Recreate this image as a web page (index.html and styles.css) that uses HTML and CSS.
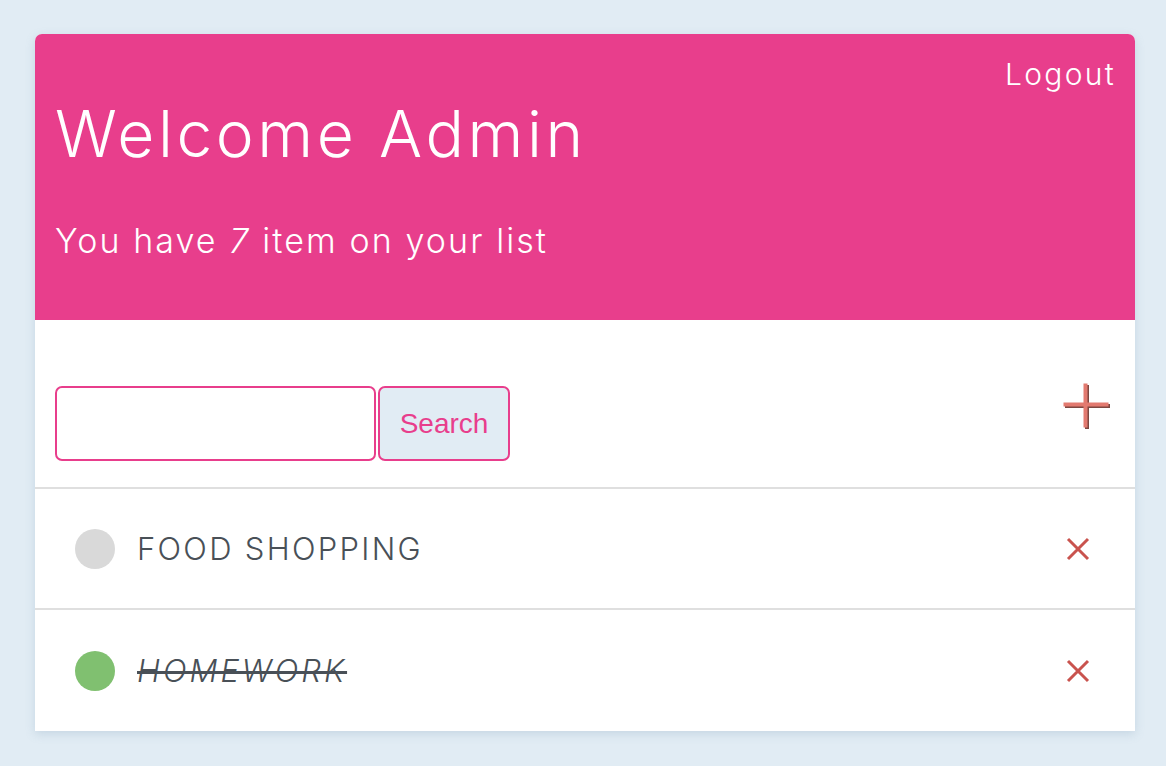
FILE: index.html
```html
<!DOCTYPE html>
<html>
<head>
<meta charset="utf-8">
<link rel="stylesheet" href="styles.css">
</head>
<body>
<div class="card">
  <header class="header">
    <div class="header-top"><a class="logout">Logout</a></div>
    <h1 class="title">Welcome Admin</h1>
    <p class="subtitle">You have <em>7</em> item on your list</p>
  </header>
  <div class="toolbar">
    <form class="search">
      <input class="search-input" type="text">
      <button class="search-btn" type="button">Search</button>
    </form>
    <svg class="add" width="50" height="48" viewBox="0 0 50 48">
      <rect x="23" y="2" width="4" height="44" fill="#7e4741"/>
      <rect x="3" y="21" width="45" height="4" fill="#7e4741"/>
      <rect x="21.5" y="0.5" width="4" height="44" fill="#e37a70"/>
      <rect x="1.5" y="19.5" width="45" height="4" fill="#e37a70"/>
    </svg>
  </div>
  <ul class="list">
    <li class="item">
      <span class="dot"></span>
      <span class="label">FOOD SHOPPING</span>
      <svg class="del" width="24" height="24" viewBox="0 0 24 24"><path d="M2 2L22 22M22 2L2 22" stroke="#c9534e" stroke-width="3"/></svg>
    </li>
    <li class="item done">
      <span class="dot"></span>
      <span class="label">HOMEWORK</span>
      <svg class="del" width="24" height="24" viewBox="0 0 24 24"><path d="M2 2L22 22M22 2L2 22" stroke="#c9534e" stroke-width="3"/></svg>
    </li>
  </ul>
</div>
</body>
</html>
```

FILE: styles.css
```css
* { box-sizing: border-box; }
html, body { margin: 0; padding: 0; }
body {
  background: #e1ecf4;
  font-family: Inter, "Open Sans", sans-serif;
  font-weight: 300;
  padding: 34px 31px 0 35px;
  height: 766px;
  overflow: hidden;
}
.card {
  width: 1100px;
  background: #fff;
  border-radius: 7px 7px 0 0;
  box-shadow: 0 3px 10px rgba(120, 150, 180, 0.25);
}
.header {
  background: #e83e8c;
  color: #fff;
  height: 286px;
  padding: 20px 21px 0 20px;
  border-radius: 7px 7px 0 0;
}
.header-top { display: flex; justify-content: flex-end; }
.logout { font-size: 30px; line-height: 40px; letter-spacing: 2.3px; margin-right: -2px; }
.title {
  margin: 0;
  font-weight: 300;
  font-size: 64px;
  line-height: 80px;
  margin-top: 0;
  letter-spacing: 3.6px;
}
.subtitle {
  margin: 47px 0 0;
  font-size: 34px;
  line-height: 40px;
  letter-spacing: 2.1px;
}
.subtitle em { font-style: italic; }
.toolbar {
  display: flex;
  align-items: center;
  justify-content: space-between;
  padding: 66px 23px 26px 20px;
  border-bottom: 2px solid #dfdfdf;
}
.search { display: flex; gap: 2px; }
.search-input {
  width: 321px;
  height: 75px;
  border: 2px solid #e83e8c;
  border-radius: 7px;
  background: #fff;
}
.search-btn {
  width: 132px;
  height: 75px;
  border: 2px solid #e83e8c;
  border-radius: 7px;
  background: #e1ecf4;
  color: #e83e8c;
  font-family: "Liberation Sans", Arial, sans-serif;
  font-size: 28px;
  padding: 0;
}
.add { margin-top: -34px; }
.list { list-style: none; margin: 0; padding: 0; }
.item {
  display: flex;
  align-items: center;
  height: 121px;
  padding: 0 45px 0 40px;
  border-bottom: 2px solid #dfdfdf;
  color: #495057;
}
.item:last-child { border-bottom: none; }
.dot {
  width: 40px;
  height: 40px;
  border-radius: 50%;
  background: #d9d9d9;
  flex: none;
}
.done .dot { background: #80c070; }
.label {
  margin-left: 22px;
  font-size: 31px;
  flex: 1;
  letter-spacing: 2.3px;
}
.done .label {
  font-style: italic;
  letter-spacing: 3px;
  text-decoration: line-through;
  text-decoration-thickness: 3px;
}
.del { flex: none; }
```
